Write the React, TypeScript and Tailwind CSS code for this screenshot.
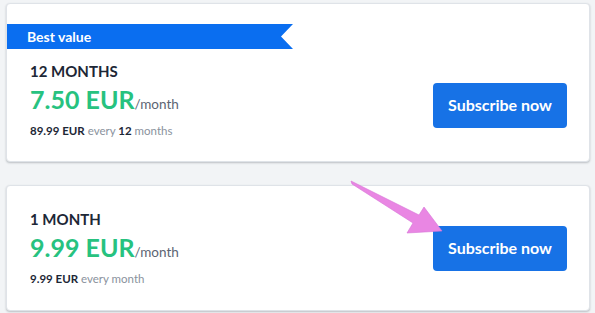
import React from 'react'

type Plan = {
  title: string
  price: string
  total: string
  every: React.ReactNode
  best?: boolean
}

const plans: Plan[] = [
  { title: '12 MONTHS', price: '7.50 EUR', total: '89.99 EUR', every: <>every <b className="font-bold text-[#1d2736]">12</b> months</>, best: true },
  { title: '1 MONTH', price: '9.99 EUR', total: '9.99 EUR', every: <>every month</> },
]

function PlanCard({ plan }: { plan: Plan }) {
  return (
    <div className="bg-white border border-[#dfe3e8] rounded-[4px] shadow-[0_1px_2px_rgba(60,70,80,0.3)]">
      {plan.best && (
        <div className="pt-[20px]">
          <div className="w-[286px] h-[25px] bg-[#0a6ef0] flex items-center pl-[20px] text-white text-[14px] font-bold [clip-path:polygon(0_0,100%_0,calc(100%_-_12px)_50%,100%_100%,0_100%)]">
            Best value
          </div>
        </div>
      )}
      <div className="flex items-center justify-between pl-[23px] pr-[22px]">
        <div className={plan.best ? 'pt-[12px] pb-[22px]' : 'py-[23px]'}>
          <div className="text-[15px] leading-[20px] font-bold text-[#1d2736]">{plan.title}</div>
          <div className="mt-[4px] leading-[29px] text-[#27c27f]">
            <span className="text-[25px] font-bold">{plan.price}</span>
            <span className="text-[13.5px] text-[#5c6573]">/month</span>
          </div>
          <div className="mt-[4px] text-[11.5px] leading-[16px] text-[#8a929d]">
            <span className="font-bold text-[#1d2736]">{plan.total}</span> {plan.every}
          </div>
        </div>
        <button className="w-[134px] h-[45px] rounded-[4px] bg-[#1772e6] text-white text-[16px] font-bold">
          Subscribe now
        </button>
      </div>
    </div>
  )
}

export default function App() {
  return (
    <div className="relative w-[595px] h-[313px] bg-[#f2f4f6] pl-[6px] pr-[5px] pt-[3px] overflow-hidden" style={{ fontFamily: 'Lato, "Open Sans", sans-serif' }}>
      <div className="flex flex-col gap-[23px]">
        {plans.map(p => (
          <PlanCard key={p.title} plan={p} />
        ))}
      </div>
      {/* pink annotation arrow */}
      <svg className="absolute inset-0 pointer-events-none" width="595" height="313">
        <polygon
          points="351,181 419,215 424,207 442,231 407,233 413,223 352,184"
          fill="#e986e3"
          stroke="#d772d6"
          strokeWidth="0.6"
          strokeLinejoin="round"
        />
      </svg>
    </div>
  )
}
